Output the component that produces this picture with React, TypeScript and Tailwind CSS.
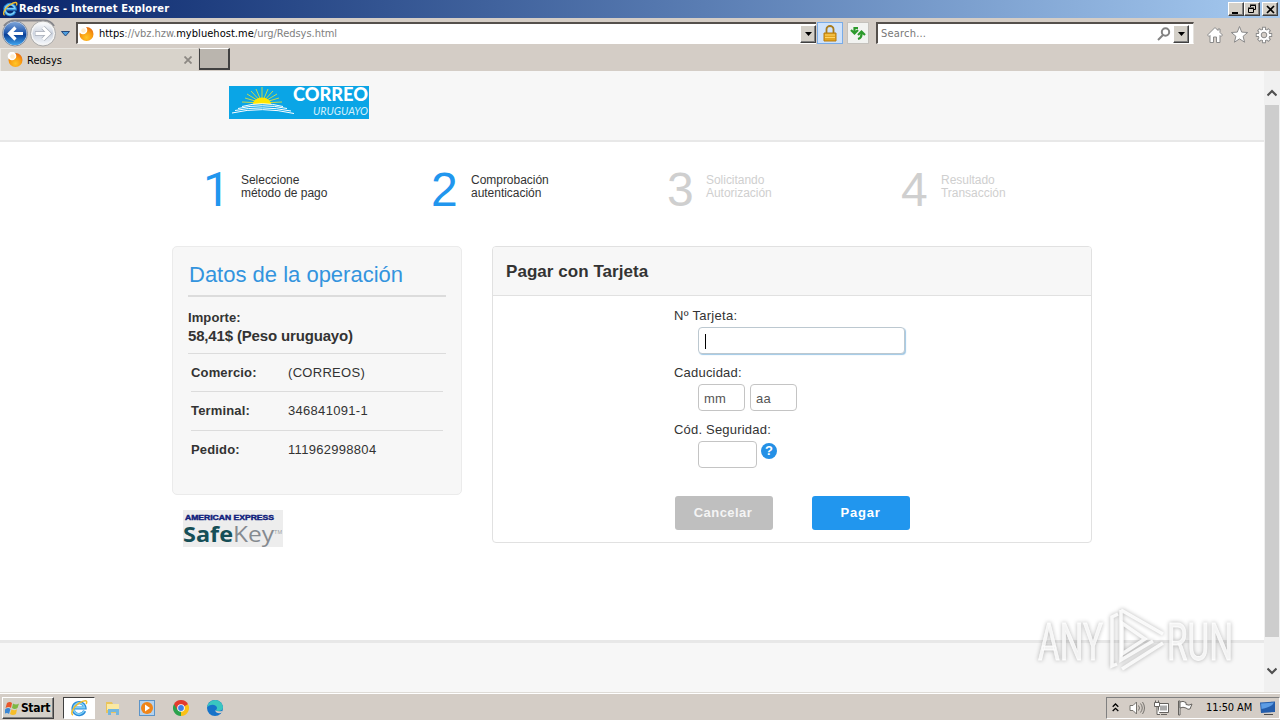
import type { ReactNode } from "react";

const steps = [
  { n: "1", lines: ["Seleccione", "método de pago"], active: true, box: "w-[230px]", font: "font-['Roboto',sans-serif] pl-[2px]" },
  { n: "2", lines: ["Comprobación", "autenticación"], active: true, box: "w-[235px]", font: "" },
  { n: "3", lines: ["Solicitando", "Autorización"], active: false, box: "w-[235px]", font: "pl-px" },
  { n: "4", lines: ["Resultado", "Transacción"], active: false, box: "w-[150px]", font: "" },
];

const details = [
  { label: "Comercio:", value: "(CORREOS)" },
  { label: "Terminal:", value: "346841091-1" },
  { label: "Pedido:", value: "111962998804" },
];

function IeIcon({ size }: { size: number }) {
  return (
    <svg width={size} height={size} viewBox="0 0 18 18" fill="none" className="shrink-0">
      <path d="M14.6 11.8A6 6 0 1 1 15 9H4" stroke="#2a8ad8" strokeWidth="3.2" />
      <path d="M14.2 11.8A5.6 5.6 0 1 1 14.6 8.6H5" stroke="#7fd0f7" strokeWidth="1.6" />
      <path d="M3 16C0 15 3 8 9 4.200S18 1 16.200 5" stroke="#f2bd2c" strokeWidth="1.5" />
    </svg>
  );
}

function SiteIcon() {
  return (
    <svg width="16" height="16" viewBox="0 0 16 16" className="shrink-0">
      <defs>
        <radialGradient id="orb" cx="50%" cy="75%" r="70%">
          <stop offset="0" stopColor="#ffc629" />
          <stop offset="0.6" stopColor="#f99a10" />
          <stop offset="1" stopColor="#e87010" />
        </radialGradient>
      </defs>
      <circle cx="8.500" cy="8" r="7" fill="url(#orb)" />
      <circle cx="5" cy="4" r="4.300" fill="#fff" />
      <circle cx="5.500" cy="4.500" r="2.300" fill="#ffeccc" />
    </svg>
  );
}

function Bevel({ className, children }: { className: string; children?: ReactNode }) {
  return (
    <div
      className={`flex shrink-0 items-center justify-center border border-t-white border-l-white border-r-[#404040] border-b-[#404040] bg-[#d4d0c8] shadow-[inset_-1px_-1px_0_#808080] ${className}`}
    >
      {children}
    </div>
  );
}

function DownArrow() {
  return (
    <svg width="7" height="4" viewBox="0 0 7 4">
      <path d="M0 0H7L3.500 4Z" fill="#000" />
    </svg>
  );
}

function TitleBar() {
  return (
    <div className="flex h-[18px] items-center bg-linear-to-r from-[#0a246a] to-[#a6caf0] pr-[2px] pl-[2px]">
      <IeIcon size={16} />
      <span className="mt-px ml-[1px] flex-1 text-[11px] font-bold tracking-[0.14px] text-white">Redsys - Internet Explorer</span>
      <Bevel className="h-[14px] w-4">
        <svg width="10" height="9" viewBox="0 0 10 9"><path d="M1 7h6v2H1z" /></svg>
      </Bevel>
      <Bevel className="h-[14px] w-4">
        <svg width="10" height="10" viewBox="0 0 10 10" fill="none" stroke="#000">
          <path d="M3.500 3V1.500h5v4H7M3 1h6M1.500 4.500h5v4h-5zM1 4h6" />
        </svg>
      </Bevel>
      <Bevel className="ml-[2px] h-[14px] w-4">
        <svg width="9" height="9" viewBox="0 0 9 9" stroke="#000" strokeWidth="1.700"><path d="M1 1l7 7M8 1L1 8" /></svg>
      </Bevel>
    </div>
  );
}

function AddressBar() {
  return (
    <div className="flex h-[30px] items-center">
      <svg width="76" height="30" viewBox="0 0 76 30" className="shrink-0">
        <defs>
          <linearGradient id="nav" x1="0" y1="0" x2="0" y2="1">
            <stop offset="0" stopColor="#7da4d8" />
            <stop offset="0.45" stopColor="#245bb0" />
            <stop offset="0.55" stopColor="#0b3f96" />
            <stop offset="1" stopColor="#3fa4ee" />
          </linearGradient>
          <linearGradient id="navOff" x1="0" y1="0" x2="0" y2="1">
            <stop offset="0" stopColor="#fafbfd" />
            <stop offset="0.5" stopColor="#ccd3df" />
            <stop offset="1" stopColor="#f3f6fa" />
          </linearGradient>
        </defs>
        <path d="M4 8Q9 2 16 2.500H43Q50 2 54 8" fill="none" stroke="#85858a" strokeWidth="2" />
        <circle cx="43" cy="15.500" r="12.500" fill="#f4f4f4" stroke="#a9a9a9" />
        <circle cx="43" cy="15.500" r="10.500" fill="url(#navOff)" />
        <circle cx="15" cy="15.500" r="12.500" fill="#e4e9f2" stroke="#848c9b" />
        <circle cx="15" cy="15.500" r="11.500" fill="url(#nav)" />
        <path d="M23 15.500H10M15.500 9.500l-6 6 6 6" fill="none" stroke="#fff" strokeWidth="3.200" />
        <path d="M35 15.500H48M43 9.500l6 6-6 6" fill="none" stroke="#aab0ba" strokeWidth="4.500" />
        <path d="M35.500 15.500H48M43 9.500l6 6-6 6" fill="none" stroke="#fff" strokeWidth="3" />
        <path d="M61.500 13.500H69.500L65.500 18Z" fill="#4d9fe0" stroke="#25497c" />
      </svg>
      <div className="flex h-[22px] w-[740px] shrink-0 items-center border-t-2 border-b border-l-2 border-t-[#55504c] border-b-white border-l-[#55504c] bg-white">
        <SiteIcon />
        <span className="mt-[2px] ml-[5px] flex-1 text-[11px] tracking-[-0.03px] text-[#808080]">
          <span className="text-black">https</span>://vbz.hzw.<span className="tracking-[0.04px] text-black">mybluehost.me</span>/urg/Redsys.html
        </span>
        <Bevel className="h-[18px] w-4"><DownArrow /></Bevel>
      </div>
      <div className="ml-[1px] flex h-[22px] w-[26px] shrink-0 items-center justify-center border border-[#79ace8] bg-[#cfe2fa]">
        <svg width="14" height="17" viewBox="0 0 14 17">
          <path d="M3.500 8V4a3.500 3 0 0 1 7 0v4" fill="none" stroke="#a87b1c" strokeWidth="1.800" />
          <path d="M1 8h12v8H1z" fill="#e3a41f" stroke="#b77a0a" />
          <path d="M2 10h10M2 12.500h10" stroke="#ffd465" />
        </svg>
      </div>
      <div className="ml-1 flex h-[22px] w-[22px] shrink-0 items-center justify-center border border-[#c5c2bd] bg-[#f2f3f1]">
        <svg width="16" height="16" viewBox="0 0 16 16" fill="none" stroke="#2c9a2c" strokeWidth="2.200">
          <path d="M8 3H4.500V7.500M1 5l3.500 3.500L8 5" />
          <path d="M8 14q3.500-1 3.500-4.500V7.500M8 10l3.500-3.500L15 10" />
        </svg>
      </div>
      <div className="ml-[7px] flex h-[22px] w-[318px] shrink-0 items-center border-t-2 border-r border-b border-l-2 border-t-[#55504c] border-r-[#e5e2dd] border-b-white border-l-[#55504c] bg-white pr-1">
        <span className="mt-[2px] ml-[3px] flex-1 text-[11px] tracking-[0.2px] text-[#777]">Search...</span>
        <svg width="14" height="14" viewBox="0 0 14 14" fill="none" stroke="#828282" strokeWidth="2" className="mr-[2px]">
          <circle cx="8.500" cy="5" r="3.700" />
          <path d="M6 8L1 13" />
        </svg>
        <Bevel className="h-[18px] w-4"><DownArrow /></Bevel>
      </div>
      <svg width="72" height="20" viewBox="0 0 72 20" fill="#fff" stroke="#8a8a8a" strokeWidth="1" className="mt-[4px] ml-[12px] shrink-0">
        {/* Home */}
        <path d="M9 2.500L1.500 10l1.500 1.500 1-1V17.500h3.500V12h3v5.500H14v-7l1 1 1.500-1.500-2.500-2.500V4h-2v1.500z" />
        {/* Favorites */}
        <path d="M33.500 1.500l2.200 5.600 6 .4-4.600 3.800 1.500 5.900-5.100-3.300-5.100 3.300 1.500-5.900-4.600-3.800 6-.4z" />
        {/* Tools */}
        <g transform="translate(58 10)">
          <g stroke="#8a8a8a" strokeWidth="3.800">
            <path d="M0-8.200V8.200M-8.200 0H8.200M-5.700-5.700L5.700 5.700M-5.700 5.700L5.700-5.700" />
          </g>
          <circle r="5.700" />
          <g stroke="#fff" strokeWidth="2">
            <path d="M0-7.300V7.300M-7.300 0H7.300M-5-5L5 5M-5 5L5-5" />
          </g>
          <circle r="5" stroke="none" />
          <circle r="2.800" fill="#d4cdc6" />
        </g>
      </svg>
    </div>
  );
}

function TabBar() {
  return (
    <div className="flex h-[23px]">
      <div className="flex w-[198px] items-center border-t border-l border-[#e9e6e1] bg-[#d8d3cb] pl-[6px]">
        <SiteIcon />
        <span className="mt-[2px] ml-[4px] flex-1 text-[11px] text-black">Redsys</span>
        <svg width="8" height="8" viewBox="0 0 8 8" stroke="#8c8883" strokeWidth="1.800" className="mr-[6px]">
          <path d="M.5.5l7 7M7.500.5l-7 7" />
        </svg>
      </div>
      <div className="ml-px h-[22px] w-[31px] border border-r-2 border-b-2 border-white border-r-[#404040] border-b-[#404040] border-l-[#404040] bg-[#bab5ae]" />
    </div>
  );
}

function CorreoLogo() {
  return (
    <svg width="140" height="33" viewBox="0 0 140 33">
      <rect width="140" height="33" fill="#0aa5e6" />
      <g stroke="#d9de3a" strokeWidth="0.900">
        <path d="M33 17L13 16M33 17L16 12M33 17L18 8M33 17L22 5M33 17L27 3M33 17V1M33 17L39 3M33 17L44 5M33 17L48 8M33 17L50 12M33 17L53 16" />
      </g>
      <path d="M24 18a9 6.500 0 0 1 18 0Z" fill="#ffe600" />
      <g fill="none" stroke="#fff" strokeWidth="1">
        <path d="M13 20.500Q33 15 54 20.500M9 22.500Q33 17 58 22.500M6 24.500Q33 19 62 25M3 27Q33 20 65 27.500" />
      </g>
      <text x="64" y="15" textLength="75" lengthAdjust="spacingAndGlyphs" className="fill-white font-['Lato','Open_Sans',sans-serif] text-[18px] font-black">CORREO</text>
      <text x="84" y="29" textLength="55" lengthAdjust="spacingAndGlyphs" className="fill-[#d4effb] font-['Lato',sans-serif] text-[11px] italic">URUGUAYO</text>
    </svg>
  );
}

function SafeKeyLogo() {
  return (
    <svg width="100" height="37" viewBox="0 0 100 37">
      <rect width="100" height="37" fill="#ededed" />
      <text x="2" y="10" textLength="89" lengthAdjust="spacingAndGlyphs" stroke="#10207c" strokeWidth="0.400" className="fill-[#10207c] font-['Liberation_Sans',sans-serif] text-[6.500px] font-bold">AMERICAN EXPRESS</text>
      <text x="0" y="31.500" textLength="50" lengthAdjust="spacingAndGlyphs" className="fill-[#164f57] font-['Open_Sans',sans-serif] text-[22px] font-bold">Safe</text>
      <text x="50" y="31.500" textLength="41" lengthAdjust="spacingAndGlyphs" className="fill-[#858a90] font-['Open_Sans',sans-serif] text-[22px]">Key</text>
      <text x="91" y="24" textLength="8" lengthAdjust="spacingAndGlyphs" className="fill-[#9a9da1] font-['Liberation_Sans',sans-serif] text-[5px]">TM</text>
    </svg>
  );
}

function Steps() {
  return (
    <div className="flex h-[104px] pt-[19px] pl-[201px]">
      {steps.map((s) => (
        <div key={s.n} className={`flex ${s.box}`}>
          <span className={`w-10 pt-px text-[48px] leading-[55px] ${s.font} ${s.active ? "text-[#2196ee]" : "text-[#cfcfcf]"}`}>{s.n}</span>
          <p className={`pt-[13px] text-[12px] leading-[13px] tracking-[-0.03px] ${s.active ? "text-[#333]" : "text-[#cfcfcf]"}`}>
            {s.lines[0]}
            <br />
            {s.lines[1]}
          </p>
        </div>
      ))}
    </div>
  );
}

function Operation() {
  return (
    <div className="w-[290px]">
      <div className="h-[249px] rounded-[5px] border border-[#ebebeb] bg-[#f7f7f7] px-[15px] text-[#333]">
        <h2 className="h-[50px] border-b-2 border-[#dcdcdc] pt-[15px] pl-px text-[22px] leading-[26px] text-[#3394de]">
          Datos de la operación
        </h2>
        <div className="h-[57px] border-b border-[#dcdcdc] pt-[12px] font-bold">
          <p className="text-[13px] leading-[18px] tracking-[0.1px]">Importe:</p>
          <p className="text-[15px] leading-[18px] tracking-[-0.16px]">58,41$ (Peso uruguayo)</p>
        </div>
        <div className="mr-[3px] ml-[3px] text-[13px]">
          {details.map((d) => (
            <div key={d.label} className="flex h-[38.4px] items-center border-b border-[#dcdcdc] pb-px first:pb-0 last:border-0">
              <span className="w-[97px] font-bold tracking-[0.15px]">{d.label}</span>
              <span className="tracking-[0.3px]">{d.value}</span>
            </div>
          ))}
        </div>
      </div>
      <div className="mt-[15px] ml-[11px]">
        <SafeKeyLogo />
      </div>
    </div>
  );
}

function PaymentCard() {
  return (
    <div className="h-[297px] w-[600px] rounded-[4px] border border-[#e1e1e1] bg-white text-[13px] text-[#333]">
      <h3 className="flex h-[49px] items-center rounded-t-[3px] border-b border-[#e1e1e1] bg-[#f7f7f7] pt-px pl-[13px] text-[17px] font-bold tracking-[0.05px]">
        Pagar con Tarjeta
      </h3>
      <div className="pt-[11px] pl-[182px]">
        <p className="-ml-px h-[20px] leading-[17px] tracking-[0.3px]">Nº Tarjeta:</p>
        <div className="ml-[23px] flex h-[27px] w-[207px] items-center rounded-[4px] border border-[#bcc8d0] bg-white pt-px pl-[6px] shadow-[1px_1px_1px_#9fc8e6]">
          <span className="h-[15px] w-px bg-black" />
        </div>
        <p className="mt-[10px] -ml-px h-[20px] leading-[17px] tracking-[0.2px]">Caducidad:</p>
        <div className="ml-[23px] flex gap-[5px] text-[#555]">
          <div className="h-[27px] w-[47px] rounded-[4px] border border-[#c4c4c4] pl-[5px] leading-[27px] tracking-[0.2px]">mm</div>
          <div className="h-[27px] w-[47px] rounded-[4px] border border-[#c4c4c4] pl-[5px] leading-[27px] tracking-[0.2px]">aa</div>
        </div>
        <p className="mt-[10px] -ml-px h-[20px] leading-[17px] tracking-[0.2px]">Cód. Seguridad:</p>
        <div className="ml-[23px] flex gap-1">
          <div className="h-[27px] w-[59px] rounded-[4px] border border-[#c4c4c4]" />
          <div className="mt-[2px] flex h-4 w-4 items-center justify-center rounded-full bg-[#2490e6] text-[13px] font-bold text-white">?</div>
        </div>
        <div className="mt-[28px] flex gap-[39px] text-[13px] font-bold text-white">
          <div className="flex h-[34px] w-[98px] items-center justify-center rounded-[3px] bg-[#bfbfbf] pr-[2px] tracking-[0.45px] text-[#f4f4f4]">Cancelar</div>
          <div className="flex h-[34px] w-[98px] items-center justify-center rounded-[3px] bg-[#2196ee] pr-px tracking-[0.8px]">Pagar</div>
        </div>
      </div>
    </div>
  );
}

function ScrollBar() {
  return (
    <div className="flex w-4 flex-col items-center bg-[#f0f0f0]">
      <svg width="10" height="34" viewBox="0 0 10 34" fill="none" stroke="#505050" strokeWidth="2.200">
        <path d="M.5 24.500l4.500-4.500 4.500 4.500" />
      </svg>
      <div className="h-[532px] w-[14px] bg-[#cdcdcd]" />
      <svg width="10" height="55" viewBox="0 0 10 55" fill="none" stroke="#505050" strokeWidth="2.200">
        <path d="M.5 31.500l4.500 4.500 4.500-4.500" />
      </svg>
    </div>
  );
}

function Watermark() {
  return (
    <svg width="204" height="76" viewBox="0 0 204 76" className="absolute top-[602px] left-[1034px] drop-shadow-[0_0_2px_rgba(0,0,0,0.35)]">
      <g className="fill-white/80 stroke-white/80 font-['Roboto',sans-serif] text-[52px]" strokeWidth="0.800">
        <text x="4" y="58" textLength="65" lengthAdjust="spacingAndGlyphs">ANY</text>
        <text x="133" y="58" textLength="66" lengthAdjust="spacingAndGlyphs">RUN</text>
      </g>
      <g fill="none" stroke="#fff" strokeOpacity="0.85" strokeWidth="3.500">
        <path d="M84 12L78 15V64L83 62" />
        <path d="M87 8V58L119 39M87 8L129 32" />
        <path d="M88 21V52L111 37Z" />
        <path d="M129 41L88 67" />
      </g>
    </svg>
  );
}

function TaskBar() {
  return (
    <div className="flex h-[28px] items-center border-t border-[#dedbd6] bg-[#d4cdc6] pt-[2px] shadow-[inset_0_1px_0_#fff]">
      <Bevel className="ml-[2px] h-[22px] w-[52px]">
        <svg width="16" height="16" viewBox="0 0 16 16" className="shrink-0">
          <path d="M2 3q3-2 5 0L6 8Q4 6 .5 8z" fill="#e8572b" />
          <path d="M8 3.500q3 2 6 0L12.500 8q-3 2-5.500 0z" fill="#7db843" />
          <path d="M.3 9q3-2 5.200 0L4 14q-2-2-5 0z" fill="#3b87d4" />
          <path d="M6.500 9.300q3 2 5.500 0L11 14q-3 2-6 0z" fill="#f6bd28" />
        </svg>
        <span className="mr-px text-[12px] font-bold tracking-[-0.3px] text-black">Start</span>
      </Bevel>
      <div className="ml-[9px] flex h-[22px] w-[32px] items-center justify-center border border-[#404040] border-r-white border-b-white bg-white">
        <IeIcon size={18} />
      </div>
      <svg width="16" height="16" viewBox="0 0 16 16" className="ml-[10px]">
        <path d="M1 2h6l1 2h6v9H1z" fill="#e9c45c" />
        <path d="M2 4h12v6H2z" fill="#fbe9a2" />
        <path d="M3 15V9h11v6h-3v-3H6v3z" fill="#73b7df" />
      </svg>
      <svg width="16" height="16" viewBox="0 0 16 16" className="ml-[18px]">
        <rect x="0.500" y="0.500" width="15" height="15" fill="#b4d2ee" stroke="#5c94c8" />
        <circle cx="8" cy="8" r="6" fill="#f08519" />
        <path d="M6 4.500L11 8L6 11.500Z" fill="#fff" />
      </svg>
      <svg width="16" height="16" viewBox="0 0 16 16" className="ml-[18px]">
        <path d="M8 8L1.070 4A8 8 0 0 1 14.930 4Z" fill="#e33b2e" />
        <path d="M8 8L14.930 4A8 8 0 0 1 8 16Z" fill="#fbc116" />
        <path d="M8 8V16A8 8 0 0 1 1.070 4Z" fill="#2ba24c" />
        <path d="M1.070 4H15L8 8.500L4.500 10Z" fill="#e33b2e" />
        <circle cx="8" cy="8" r="3.800" fill="#fff" />
        <circle cx="8" cy="8" r="2.900" fill="#3f7fe8" />
      </svg>
      <svg width="16" height="16" viewBox="0 0 16 16" className="ml-[18px]">
        <circle cx="8" cy="8" r="8" fill="#1673c9" />
        <path d="M0 7Q2 0 8.500 0 15 1 16 7q0 4-5 4-2 0-2-1 2-2 0-4Q5 3 0 7" fill="#39c6c0" />
        <path d="M8.500 10q1 2 7 1l-.5 1.500q-3 1.500-5.500 0-1.500-1-1-2.500" fill="#d4cdc6" />
      </svg>
      <div className="ml-auto flex h-[22px] w-[174px] items-center border border-t-[#808080] border-r-white border-b-white border-l-[#808080] pr-[3px] pl-[5px]">
        <svg width="7" height="9" viewBox="0 0 7 9" fill="none" stroke="#000" strokeWidth="1.300">
          <path d="M.7 3.700L3.500 1l2.800 2.700M.7 8L3.500 5.300 6.300 8" />
        </svg>
        <svg width="16" height="16" viewBox="0 0 16 16" className="ml-[10px]" fill="none" stroke="#77746f">
          <path d="M1 5.500h3L7.500 2v12L4 10.500H1z" fill="#fff" />
          <path d="M9.500 5.500q2 2.500 0 5M11.500 3.500q3.500 4.500 0 9M13.500 2q4 6 0 12" />
        </svg>
        <svg width="17" height="16" viewBox="0 0 17 16" className="ml-[8px]" fill="#fff" stroke="#65625e">
          <path d="M5.500 3.500h10v9h-10z" />
          <path d="M7 5.500h7v5H7z" fill="#aaa" stroke="none" />
          <path d="M8 14.500h6M1.500 2.500h5v4h-5zM2.500.5v2M5.500.5v2M4 6.500v8h3" />
        </svg>
        <svg width="16" height="16" viewBox="0 0 16 16" className="ml-[7px]" fill="#fff" stroke="#65625e">
          <path d="M1.500 1h1.500v14H1.500z" />
          <path d="M3 2q3-1.500 6 .5v2q3 1.500 6-.5l-2 5q-2 1-4-1-3-1.500-6 0z" />
        </svg>
        <span className="mt-px ml-[13px] text-[11px] tracking-[-0.1px] whitespace-nowrap text-black">11:50 AM</span>
        <svg width="16" height="14" viewBox="0 0 16 14" className="ml-auto">
          <path d="M0 1.500l15-1V11L1 12z" fill="#245dab" />
          <path d="M1 2.500l13-1Q12 6 1.500 8z" fill="#5c9ce4" />
          <path d="M4 13.500h9" stroke="#4b4b4b" />
        </svg>
      </div>
    </div>
  );
}

export default function App() {
  return (
    <div className="relative flex h-[720px] w-[1280px] flex-col overflow-hidden bg-[#d4cdc6] font-['DejaVu_Sans_Condensed','DejaVu_Sans',sans-serif]">
      <TitleBar />
      <AddressBar />
      <TabBar />

      {/* Page viewport */}
      <div className="flex h-[621px] font-['Liberation_Sans',Arial,sans-serif]">
        <div className="flex flex-1 flex-col bg-white">
          <header className="h-[71px] border-b-2 border-[#e8e8e8] bg-[#f7f7f7] pt-[15px] pl-[229px]">
            <CorreoLogo />
          </header>
          <Steps />
          <main className="flex flex-1 gap-[30px] pl-[172px]">
            <Operation />
            <PaymentCard />
          </main>
          <footer className="h-[52px] border-t-[3px] border-[#e8e8e8] bg-[#f7f7f7]" />
        </div>
        <ScrollBar />
      </div>

      <TaskBar />
      <Watermark />
    </div>
  );
}
